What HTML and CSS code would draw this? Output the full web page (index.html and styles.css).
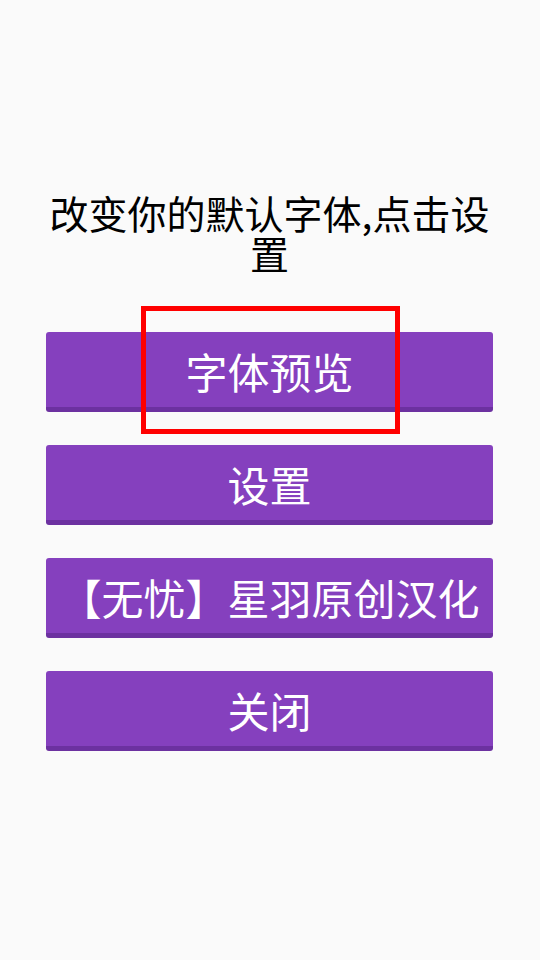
FILE: index.html
```html
<!DOCTYPE html>
<html lang="zh-CN">
<head>
<meta charset="utf-8">
<title>字体</title>
<link rel="stylesheet" href="styles.css">
</head>
<body>
<main class="screen">
  <h1 class="title">改变你的默认字体,点击设置</h1>
  <div class="buttons">
    <button class="btn">字体预览</button>
    <button class="btn">设置</button>
    <button class="btn">【无忧】星羽原创汉化</button>
    <button class="btn">关闭</button>
  </div>
  <div class="highlight"></div>
</main>
</body>
</html>
```
FILE: styles.css
```css
html, body {
  margin: 0;
  padding: 0;
  background: #fafafa;
}
.screen {
  position: relative;
  width: 540px;
  height: 960px;
  box-sizing: border-box;
  padding: 192px 47px 0 46px;
  font-family: "Noto Sans CJK SC", "Noto Sans", sans-serif;
}
.title {
  margin: 0;
  padding: 0;
  font-size: 39px;
  line-height: 40px;
  font-weight: 400;
  color: #000;
  text-align: center;
}
.buttons {
  margin-top: 60px;
  display: flex;
  flex-direction: column;
  gap: 33px;
}
.btn {
  display: flex;
  align-items: center;
  justify-content: center;
  height: 80px;
  box-sizing: border-box;
  margin: 0;
  padding: 3px 0 0;
  border: 0;
  border-bottom: 5px solid #6c31a0;
  border-radius: 3px;
  background: #8540be;
  color: #fff;
  font-family: "Noto Sans CJK SC", "Noto Sans", sans-serif;
  font-size: 42px;
  line-height: 1;
  white-space: nowrap;
  overflow: hidden;
}
.highlight {
  position: absolute;
  left: 141px;
  top: 306px;
  width: 259px;
  height: 128px;
  box-sizing: border-box;
  border: 5px solid #f00;
}
```
